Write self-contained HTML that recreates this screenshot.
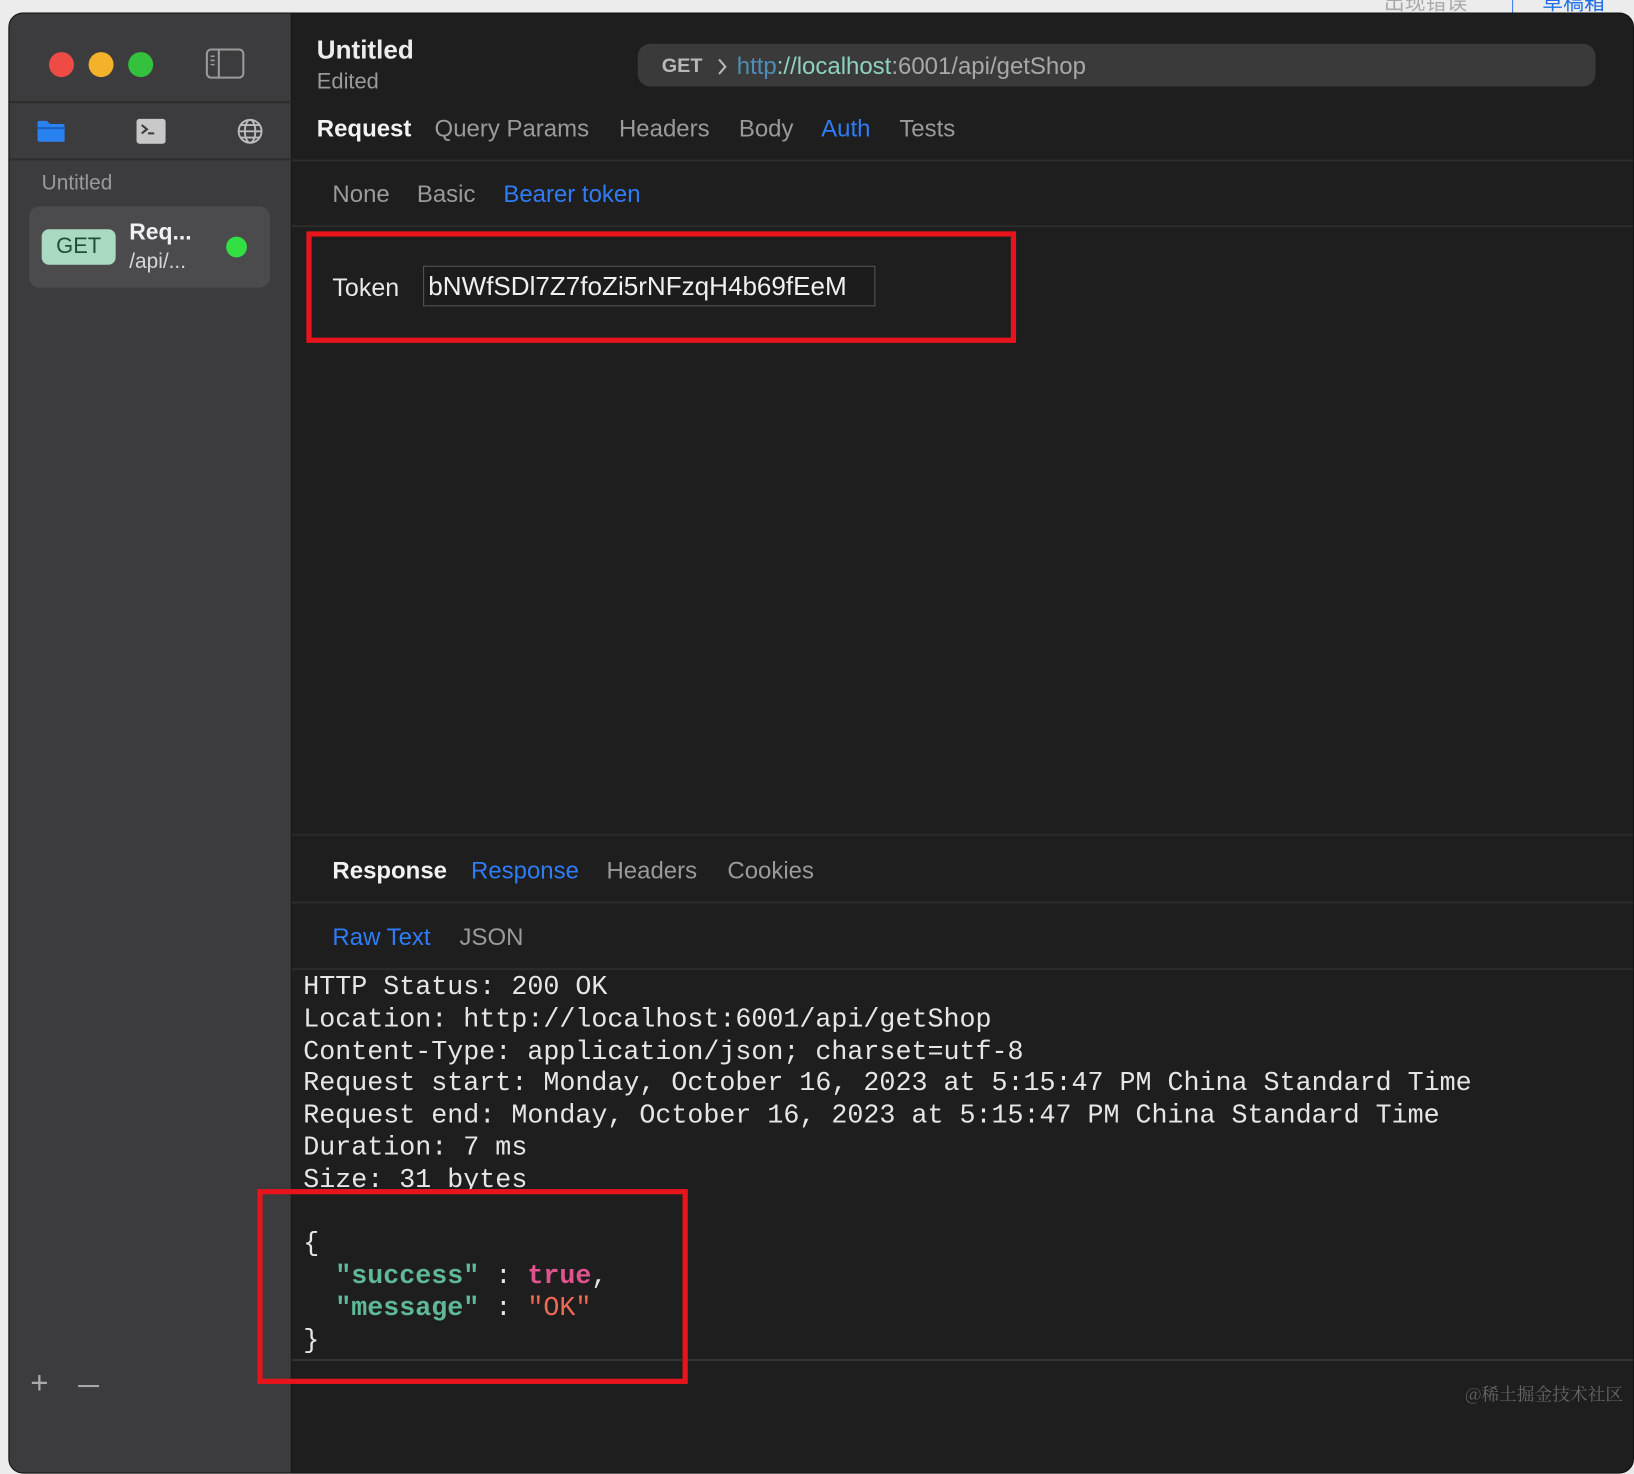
<!DOCTYPE html>
<html><head><meta charset="utf-8"><style>
html,body{margin:0;padding:0;width:1634px;height:1410px;overflow:hidden;background:#ececec;}
#s{position:absolute;left:0;top:0;width:1568px;height:1353px;transform:scale(1.04209,1.04213);transform-origin:0 0;font-family:"Liberation Sans","Noto Sans CJK SC",sans-serif;}
.a{position:absolute;white-space:nowrap;}
#win{position:absolute;left:8px;top:12px;width:1558px;height:1400px;border-radius:14px;overflow:hidden;background:#1e1e1f;border:1px solid #111;}
#side{position:absolute;left:0;top:0;width:270px;height:100%;background:#3c3c3e;border-right:1px solid #151515;}
.hl{position:absolute;height:2px;background:#2c2c2c;}
.t{font-size:23px;color:#9a9a9a;}
.mono{font-family:"Liberation Mono",monospace;font-size:25.6px;color:#e6e6e6;line-height:30.8px;white-space:pre;}
</style></head><body><div id="s">
<div class="a" style="left:1328px;top:-14px;font-size:20px;color:#aaa;">出现错误</div>
<div class="a" style="left:1451px;top:0;width:1px;height:12px;background:#3b7bf0;"></div>
<div class="a" style="left:1480px;top:-14px;font-size:20px;color:#1e6fe8;">草稿箱</div>
<div id="win">
 <div id="side">
  <div class="a" style="left:38px;top:37px;width:24px;height:24px;border-radius:50%;background:#ee4b45;"></div>
  <div class="a" style="left:76px;top:37px;width:24px;height:24px;border-radius:50%;background:#f4b12a;"></div>
  <div class="a" style="left:114px;top:37px;width:24px;height:24px;border-radius:50%;background:#33c13e;"></div>
  <svg class="a" style="left:188px;top:33px" width="38" height="30"><rect x="1.5" y="1.5" width="35" height="27" rx="4" fill="none" stroke="#9a9a9a" stroke-width="2"/><line x1="13" y1="2" x2="13" y2="28" stroke="#9a9a9a" stroke-width="2"/><line x1="5" y1="8" x2="9" y2="8" stroke="#9a9a9a" stroke-width="1.5"/><line x1="5" y1="12" x2="9" y2="12" stroke="#9a9a9a" stroke-width="1.5"/><line x1="5" y1="16" x2="9" y2="16" stroke="#9a9a9a" stroke-width="1.5"/></svg>
  <div class="hl" style="left:0;top:84px;width:270px;background:#2e2e2e"></div>
  <svg class="a" style="left:26px;top:102px" width="28" height="22"><path d="M1 3 Q1 1 3 1 H10 L13 4 H25 Q27 4 27 6 V20 Q27 21 25 21 H3 Q1 21 1 19 Z" fill="#2a82f0"/><rect x="1" y="7" width="26" height="2" fill="#1a5fc0"/></svg>
  <svg class="a" style="left:122px;top:101px" width="28" height="24"><rect x="0" y="0" width="28" height="24" rx="3" fill="#c8c8c8"/><path d="M5 6 L10 10 L5 14" stroke="#3c3c3e" stroke-width="2" fill="none"/><line x1="11" y1="14" x2="17" y2="14" stroke="#3c3c3e" stroke-width="2"/></svg>
  <svg class="a" style="left:217px;top:99px" width="28" height="28" fill="none" stroke="#bdbdbd" stroke-width="1.8"><circle cx="14" cy="14" r="11"/><ellipse cx="14" cy="14" rx="5" ry="11"/><line x1="3" y1="14" x2="25" y2="14"/><path d="M5 8 H23 M5 20 H23"/></svg>
  <div class="hl" style="left:0;top:139px;width:270px;background:#2e2e2e"></div>
  <div class="a" style="left:31px;top:152px;font-size:20px;color:#9a9a9a;">Untitled</div>
  <div class="a" style="left:19px;top:185px;width:231px;height:78px;border-radius:10px;background:#4b4b4d;"></div>
  <div class="a" style="left:31px;top:207px;width:71px;height:34px;border-radius:7px;background:#a9d9c0;color:#1f4f36;font-size:21px;line-height:34px;text-align:center;">GET</div>
  <div class="a" style="left:115px;top:197px;font-size:22px;font-weight:bold;color:#f0f0f0;">Req...</div>
  <div class="a" style="left:115px;top:227px;font-size:20px;color:#d8d8d8;">/api/...</div>
  <div class="a" style="left:208px;top:214px;width:20px;height:20px;border-radius:50%;background:#32e044;"></div>
  <div class="a" style="left:20px;top:1298px;font-size:30px;color:#aaa;font-weight:300;">+</div>
  <div class="a" style="left:66px;top:1316px;width:20px;height:2px;background:#aaa;"></div>
 </div>
 <div class="a" style="left:295px;top:21px;font-size:25px;font-weight:bold;color:#ececec;">Untitled</div>
 <div class="a" style="left:295px;top:54px;font-size:21px;color:#9a9a9a;">Edited</div>
 <div class="a" style="left:603px;top:29px;width:919px;height:41px;border-radius:12px;background:#3a3a3b;"></div>
 <div class="a" style="left:626px;top:40px;font-size:19px;font-weight:bold;color:#b8b8b8;">GET</div>
 <svg class="a" style="left:678px;top:41px" width="12" height="20"><path d="M3 3 L9 10 L3 17" stroke="#b8b8b8" stroke-width="2" fill="none"/></svg>
 <div class="a" style="left:698px;top:37px;font-size:23px;color:#a8a8a8;"><span style="color:#4d8fb5">http</span><span style="color:#8fd1c1">://localhost</span>:6001/api/getShop</div>
 <div class="a t" style="left:295px;top:97px;"><b style="color:#f2f2f2">Request</b></div>
 <div class="a t" style="left:408px;top:97px;">Query Params</div>
 <div class="a t" style="left:585px;top:97px;">Headers</div>
 <div class="a t" style="left:700px;top:97px;">Body</div>
 <div class="a t" style="left:779px;top:97px;color:#2f7cf6;">Auth</div>
 <div class="a t" style="left:854px;top:97px;">Tests</div>
 <div class="hl" style="left:271px;top:140px;width:1290px;"></div>
 <div class="a t" style="left:310px;top:160px;">None</div>
 <div class="a t" style="left:391px;top:160px;">Basic</div>
 <div class="a t" style="left:474px;top:160px;color:#2f7cf6;">Bearer token</div>
 <div class="hl" style="left:271px;top:203px;width:1290px;"></div>
 <div class="a" style="left:285px;top:209px;width:671px;height:97px;border:5px solid #e8141c;"></div>
 <div class="a" style="left:310px;top:250px;font-size:24px;color:#e8e8e8;">Token</div>
 <div class="a" style="left:397px;top:242px;width:432px;height:37px;border:1px solid #555;background:#1c1c1c;"></div>
 <div class="a" style="left:402px;top:248px;font-size:25px;color:#f0f0f0;">bNWfSDl7Z7foZi5rNFzqH4b69fEeM</div>
 <div class="hl" style="left:271px;top:787px;width:1290px;background:#2a2a2a"></div>
 <div class="a t" style="left:310px;top:809px;"><b style="color:#f2f2f2">Response</b></div>
 <div class="a t" style="left:443px;top:809px;color:#2f7cf6;">Response</div>
 <div class="a t" style="left:573px;top:809px;">Headers</div>
 <div class="a t" style="left:689px;top:809px;">Cookies</div>
 <div class="hl" style="left:271px;top:852px;width:1290px;"></div>
 <div class="a t" style="left:310px;top:873px;color:#2f7cf6;">Raw Text</div>
 <div class="a t" style="left:432px;top:873px;">JSON</div>
 <div class="hl" style="left:271px;top:916px;width:1290px;"></div>
 <div class="a mono" style="left:282px;top:920px;">HTTP Status: 200 OK
Location: http://localhost:6001/api/getShop
Content-Type: application/json; charset=utf-8
Request start: Monday, October 16, 2023 at 5:15:47 PM China Standard Time
Request end: Monday, October 16, 2023 at 5:15:47 PM China Standard Time
Duration: 7 ms
Size: 31 bytes

{
  <b style="color:#5fb896">"success"</b> : <b style="color:#e0538f">true</b>,
  <b style="color:#5fb896">"message"</b> : <span style="color:#ef6a55">"OK"</span>
}</div>
 <div class="hl" style="left:271px;top:1291px;width:1290px;background:#333"></div>
 <div class="a" style="left:238px;top:1128px;width:403px;height:177px;border:5px solid #e8141c;"></div>
</div>
<div class="a" style="left:1406px;top:1324px;font-size:17px;color:#666;font-family:'Noto Serif CJK SC',serif;">@稀土掘金技术社区</div>
</div></body></html>
